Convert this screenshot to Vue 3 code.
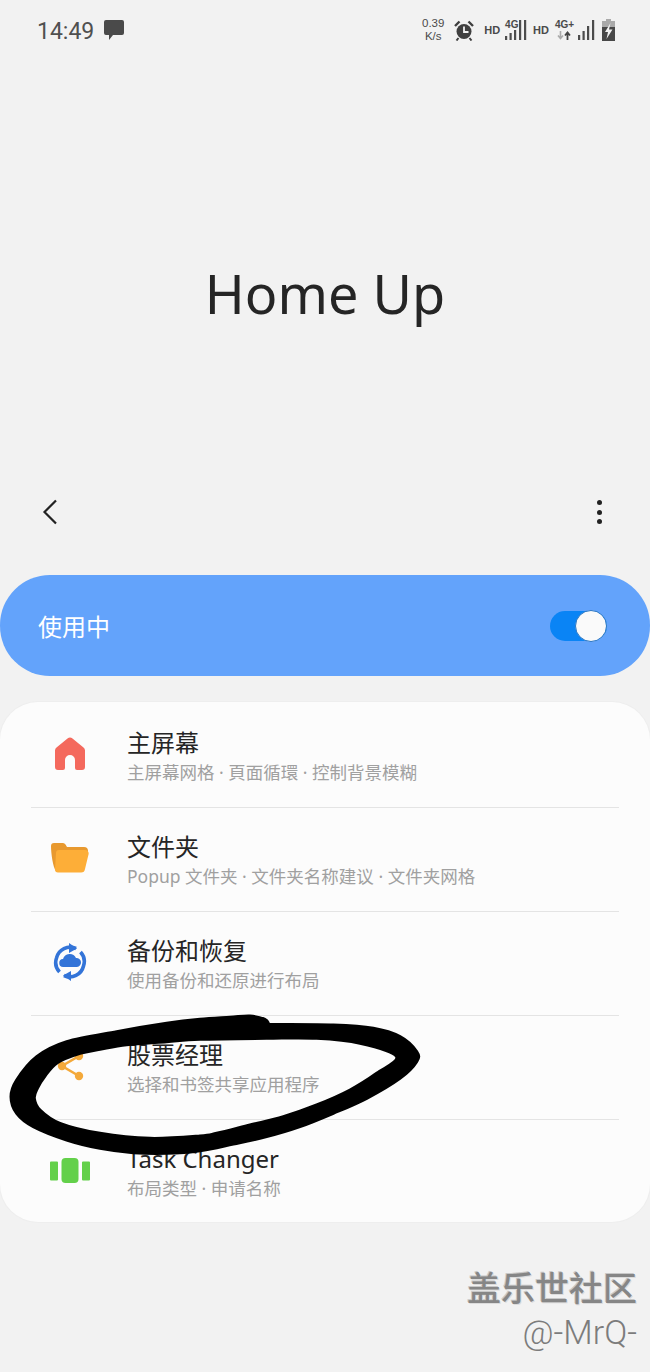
<template>
  <div class="page">
    <div class="status">
      <div class="status-left">
        <span class="clock">14:49</span>
        <svg class="msg" width="20" height="20" viewBox="0 0 20 20">
          <path d="M2 0h16a2 2 0 0 1 2 2v11a2 2 0 0 1-2 2H9l-4 5v-5H2a2 2 0 0 1-2-2V2a2 2 0 0 1 2-2z" fill="#4a4a4a" />
        </svg>
      </div>
      <div class="status-right">
        <div class="speed">0.39<br />K/s</div>
        <svg class="alarm" width="20" height="21" viewBox="0 0 20 21">
          <circle cx="10" cy="11.500" r="7.500" fill="#404040" />
          <path d="M1 6l4.500-4.500M19 6l-4.500-4.500" stroke="#404040" stroke-width="2.400" fill="none" />
          <path d="M4.500 18l-2 2.500M15.500 18l2 2.500" stroke="#404040" stroke-width="2" fill="none" />
          <path d="M10 6.500V12H14.500" stroke="#f2f2f2" stroke-width="1.800" fill="none" />
        </svg>
        <span class="hd hd-1">HD</span>
        <div class="net net-1">
          <span class="net-label">4G</span>
          <svg width="22" height="20" viewBox="0 0 22 20">
            <rect v-for="b in firstBars" :key="b.x" :x="b.x" :y="b.y" width="2.200" :height="20 - b.y" fill="#4c4c4c" />
          </svg>
        </div>
        <span class="hd hd-2">HD</span>
        <div class="net net-2">
          <span class="net-label plus">4G+</span>
          <svg class="arrows" width="14" height="9" viewBox="0 0 14 9">
            <path d="M3.500 0v6M1 4.500l2.500 3 2.500-3" stroke="#aaa" stroke-width="1.600" fill="none" />
            <path d="M10.500 9V2M8 4.500l2.500-3 2.500 3" stroke="#444" stroke-width="1.800" fill="none" />
          </svg>
        </div>
        <svg class="bars-2" width="17" height="20" viewBox="0 0 17 20">
          <rect v-for="b in secondBars" :key="b.x" :x="b.x" :y="b.y" width="2.200" :height="20 - b.y" fill="#4c4c4c" />
        </svg>
        <svg class="battery" width="13" height="22" viewBox="0 0 13 22">
          <rect x="4" y="0" width="5" height="2" fill="#aaa" />
          <rect x="0" y="2" width="13" height="6" fill="#aaa" />
          <rect x="0" y="8" width="13" height="14" fill="#484848" />
          <path d="M8.500 4L3 13H6L4.500 20 10.500 10.500H7z" fill="#f2f2f2" />
        </svg>
      </div>
    </div>

    <div class="hero">
      <h1>Home Up</h1>
    </div>

    <div class="toolbar">
      <svg width="16" height="26" viewBox="0 0 16 26">
        <path d="M14 1.500L2.500 13 14 24.500" stroke="#222" stroke-width="2.200" fill="none" />
      </svg>
      <div class="dots"><i></i><i></i><i></i></div>
    </div>

    <div class="master">
      <span>使用中</span>
      <div class="switch"><div class="knob"></div></div>
    </div>

    <div class="card">
      <div v-for="item in items" :key="item.title" class="row">
        <div class="row-icon">
          <svg v-if="item.icon === 'home'" width="32" height="34" viewBox="0 0 32 34">
            <path d="M13.500 1.500a4 4 0 0 1 5 0l11 9a4 4 0 0 1 1.500 3V30a3 3 0 0 1-3 3h-5a2 2 0 0 1-2-2v-8a5 5 0 0 0-10 0v8a2 2 0 0 1-2 2H4a3 3 0 0 1-3-3V13.500a4 4 0 0 1 1.500-3z" fill="#f4695d" />
          </svg>
          <svg v-else-if="item.icon === 'folder'" width="38" height="30" viewBox="0 0 38 30">
            <path d="M3 0h9a3 3 0 0 1 2.500 1.500L16 4h17a4 4 0 0 1 4 4v4H5v16C2 25 0 10 0 3a3 3 0 0 1 3-3z" fill="#e8992f" />
            <path d="M8 7h26a3.500 3.500 0 0 1 3.500 4.500L34 26a4 4 0 0 1-4 3.500H7a3 3 0 0 1-3-3L5 10a3 3 0 0 1 3-3z" fill="#fdae38" />
          </svg>
          <svg v-else-if="item.icon === 'backup'" width="36" height="38" viewBox="0 0 36 38">
            <path d="M24 5.500A14 14 0 0 0 4.500 15a14 14 0 0 0 3 14" stroke="#3374d8" stroke-width="3.600" fill="none" />
            <path d="M12 32.500A14 14 0 0 0 31.500 23a14 14 0 0 0-3-14" stroke="#3374d8" stroke-width="3.600" fill="none" />
            <path d="M17 0l8 5.500-8 4.500zM19 38l-8-5.500 8-4.500z" fill="#3374d8" />
            <path d="M11.500 24a4 4 0 0 1-.5-8 7 7 0 0 1 13-1 4.500 4.500 0 0 1 1 9z" fill="#3374d8" />
          </svg>
          <svg v-else-if="item.icon === 'share'" width="32" height="38" viewBox="0 0 32 38">
            <path d="M25 9L8 19l17 10" stroke="#f4a93a" stroke-width="2.600" fill="none" />
            <circle cx="25" cy="9" r="4.200" fill="#f4a93a" />
            <circle cx="8" cy="19" r="4.200" fill="#f4a93a" />
            <circle cx="25" cy="29" r="4.200" fill="#f4a93a" />
          </svg>
          <svg v-else width="40" height="26" viewBox="0 0 40 26">
            <path d="M1 3.500h6a1 1 0 0 1 1 1v17a1 1 0 0 1-1 1H1a1 1 0 0 1-1-1v-17a1 1 0 0 1 1-1zM33 3.500h6a1 1 0 0 1 1 1v17a1 1 0 0 1-1 1h-6a1 1 0 0 1-1-1v-17a1 1 0 0 1 1-1z" fill="#63d04a" />
            <rect x="11.500" y="0" width="17" height="25" rx="4" fill="#63d04a" />
          </svg>
        </div>
        <div class="row-text">
          <div class="row-title">{{ item.title }}</div>
          <div class="row-sub">{{ item.sub }}</div>
        </div>
      </div>
    </div>

    <div class="watermark">
      <div class="wm-main">盖乐世社区</div>
      <div class="wm-user">@-MrQ-</div>
    </div>

    <svg class="scribble" width="430" height="150" viewBox="0 0 1290 450">
      <path fill="#000" fill-rule="evenodd" stroke="#000" stroke-width="9" stroke-linejoin="round" :d="scribble" />
    </svg>
  </div>
</template>

<script setup>
const firstBars = [
  { x: 0, y: 16 },
  { x: 4.500, y: 13 },
  { x: 9, y: 9 },
  { x: 14, y: 0 },
  { x: 19, y: 0 },
]

const secondBars = [
  { x: 0, y: 15 },
  { x: 4.500, y: 11 },
  { x: 9, y: 6 },
  { x: 14, y: 0 },
]

const items = [
  { icon: 'home', title: '主屏幕', sub: '主屏幕网格 · 頁面循環 · 控制背景模糊' },
  { icon: 'folder', title: '文件夹', sub: 'Popup 文件夹 · 文件夹名称建议 · 文件夹网格' },
  { icon: 'backup', title: '备份和恢复', sub: '使用备份和还原进行布局' },
  { icon: 'share', title: '股票经理', sub: '选择和书签共享应用程序' },
  { icon: 'tasks', title: 'Task Changer', sub: '布局类型 · 申请名称' },
]

// marker stroke outline, traced from the reference
const outer = [
  [805, 40], [795, 28], [750, 18], [690, 22], [600, 28], [500, 40], [350, 65], [200, 95],
  [110, 140], [50, 210], [33, 260], [50, 310], [100, 350], [200, 390], [300, 415], [400, 428],
  [500, 430], [600, 422], [700, 402], [800, 380], [900, 350], [1000, 310], [1100, 265],
  [1200, 205], [1250, 155], [1250, 125], [1200, 80], [1120, 55], [1000, 45], [805, 43],
]
const inner = [
  [800, 85], [950, 85], [1080, 100], [1190, 140], [1130, 190], [1050, 240], [950, 285],
  [850, 320], [750, 345], [650, 370], [600, 378], [450, 385], [300, 370], [180, 340],
  [120, 300], [103, 265], [112, 235], [135, 198], [172, 158], [240, 130], [300, 118], [380, 104],
  [500, 95], [600, 88],
]

// closed Catmull-Rom curve through the points
function smooth(pts) {
  const n = pts.length
  let d = `M${pts[0][0]} ${pts[0][1]}`
  for (let i = 0; i < n; i++) {
    const p0 = pts[(i - 1 + n) % n]
    const p1 = pts[i]
    const p2 = pts[(i + 1) % n]
    const p3 = pts[(i + 2) % n]
    const c1x = p1[0] + (p2[0] - p0[0]) / 6
    const c1y = p1[1] + (p2[1] - p0[1]) / 6
    const c2x = p2[0] - (p3[0] - p1[0]) / 6
    const c2y = p2[1] - (p3[1] - p1[1]) / 6
    d += `C${c1x} ${c1y} ${c2x} ${c2y} ${p2[0]} ${p2[1]}`
  }
  return d + 'Z'
}

const scribble = smooth(outer) + smooth(inner)
</script>

<style>
html,
body {
  margin: 0;
  background: #f2f2f2;
}
</style>

<style scoped>
.page {
  position: relative;
  width: 650px;
  height: 1372px;
  overflow: hidden;
  background: #f2f2f2;
  font-family: "Noto Sans", "Noto Sans CJK SC", sans-serif;
}

.status {
  height: 60px;
  display: flex;
  align-items: center;
  justify-content: space-between;
  padding: 3px 35px 0 37px;
  box-sizing: border-box;
}

.status-left,
.status-right {
  display: flex;
  align-items: center;
}

.clock {
  font-family: Roboto, sans-serif;
  font-size: 23px;
  color: #505050;
}

.msg {
  margin-left: 10px;
  margin-top: -3px;
}

.status-right {
  margin-top: -3px;
}

.speed {
  font-family: "Liberation Sans", sans-serif;
  font-size: 11.500px;
  line-height: 13.500px;
  color: #4a4a4a;
  text-align: center;
  width: 26px;
}

.alarm {
  margin-left: 8px;
}

.hd {
  font-family: "Liberation Sans", sans-serif;
  font-size: 11px;
  line-height: 14px;
  font-weight: 700;
  color: #4a4a4a;
}

.hd-1 {
  margin-left: 10px;
}

.hd-2 {
  margin-left: 6px;
}

.net {
  position: relative;
  height: 22px;
}

.net-1 {
  width: 22px;
  margin-left: 5px;
}

.net-1 svg {
  position: absolute;
  left: 0;
  top: 1px;
}

.net-2 {
  width: 18px;
  margin-left: 6px;
}

.net-label {
  position: absolute;
  left: 0;
  top: 0;
  font-family: "Liberation Sans", sans-serif;
  font-size: 10px;
  line-height: 11px;
  font-weight: 700;
  color: #4a4a4a;
  background: #f2f2f2;
  padding-right: 1px;
  z-index: 1;
}

.net-label.plus {
  background: none;
  white-space: nowrap;
}

.arrows {
  position: absolute;
  left: 2px;
  top: 12px;
}

.bars-2 {
  margin-left: 5px;
}

.battery {
  margin-left: 7px;
}

.hero {
  height: 428px;
  display: flex;
  justify-content: center;
  padding-top: 195px;
  box-sizing: border-box;
}

h1 {
  margin: 0;
  font-size: 54px;
  line-height: 76px;
  font-weight: 400;
  color: #252525;
}

.toolbar {
  height: 48px;
  display: flex;
  align-items: center;
  justify-content: space-between;
  padding: 0 48px 0 42px;
}

.dots {
  display: flex;
  flex-direction: column;
  gap: 4.500px;
}

.dots i {
  width: 5px;
  height: 5px;
  border-radius: 50%;
  background: #222;
}

.master {
  height: 101px;
  margin-top: 39px;
  border-radius: 50px;
  background: #63a3fb;
  display: flex;
  align-items: center;
  justify-content: space-between;
  padding: 0 43px 0 38px;
  color: #fff;
  font-size: 24px;
}

.switch {
  position: relative;
  width: 57px;
  height: 30px;
  border-radius: 15px;
  background: #0a84f5;
}

.knob {
  position: absolute;
  right: 0;
  top: -1px;
  width: 30px;
  height: 30px;
  border-radius: 50%;
  background: #fafafa;
  border: 1px solid #2b77c4;
}

.card {
  margin-top: 26px;
  height: 520px;
  box-sizing: border-box;
  border-radius: 38px;
  background: #fcfcfc;
  box-shadow: 0 0 0 1px #eeeeee;
  padding: 2px 31px 0;
}

.row {
  height: 104px;
  box-sizing: border-box;
  display: flex;
  align-items: center;
  border-bottom: 1px solid #e4e4e4;
}

.row:last-child {
  border-bottom: none;
}

.row-icon {
  width: 78px;
  margin-top: -3px;
  display: flex;
  justify-content: center;
}

.row-text {
  margin-left: 18px;
}

.row-title {
  font-size: 24px;
  line-height: 32px;
  color: #252525;
}

.row-sub {
  font-size: 17.500px;
  line-height: 26px;
  color: #a0a0a0;
}

.watermark {
  display: flex;
  flex-direction: column;
  align-items: flex-end;
  padding: 46px 13px 0 0;
}

.wm-main {
  font-size: 34px;
  line-height: 40px;
  font-weight: 500;
  color: #868686;
  text-shadow: 1px 1px 0 #dcdcdc, -1px -1px 0 #c8c8c8;
}

.wm-user {
  font-family: Roboto, sans-serif;
  font-size: 34px;
  line-height: 38px;
  font-weight: 300;
  color: #7c7c7c;
  margin-top: 5px;
}

.scribble {
  position: absolute;
  left: 0;
  top: 1010px;
  pointer-events: none;
}
</style>
